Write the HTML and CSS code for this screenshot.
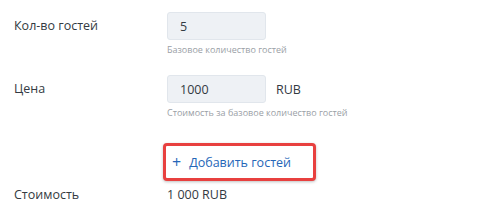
FILE: index.html
```html
<!DOCTYPE html>
<html>
<head>
    <meta charset="UTF-8" />
    <title>Гости и цена</title>
    <link rel="stylesheet" href="styles.css">
</head>
<body>

    <div class="form">
        <div class="row">
            <div class="label">Кол-во гостей</div>
            <div class="field">
                <div class="line">
                    <input type="text" class="input" value="5">
                </div>
                <div class="hint">Базовое количество гостей</div>
            </div>
        </div>

        <div class="row">
            <div class="label">Цена</div>
            <div class="field">
                <div class="line">
                    <input type="text" class="input" value="1000">
                    <span class="unit">RUB</span>
                </div>
                <div class="hint">Стоимость за базовое количество гостей</div>
            </div>
        </div>

        <div class="row row-add">
            <div class="label"></div>
            <div class="field">
                <button class="add">
                    <span class="plus">+</span>
                    Добавить гостей
                </button>
            </div>
        </div>

        <div class="row">
            <div class="label">Стоимость</div>
            <div class="field total">1 000 RUB</div>
        </div>
    </div>

</body>
</html>
```

FILE: styles.css
```css
body {
    margin: 0;
    background-color: #ffffff;
    font-family: "Open Sans", "Noto Sans", sans-serif;
    color: #333a42;
}

div.form {
    padding: 12px 0 0 14px;
}

div.row {
    display: grid;
    grid-template-columns: 153px 1fr;
}

div.label {
    font-size: 12.5px;
    line-height: 28px;
}

div.line {
    display: flex;
    align-items: center;
    gap: 10px;
}

input.input {
    box-sizing: border-box;
    width: 99px;
    height: 28px;
    padding: 0 12px;
    border: 1px solid #e1e6ec;
    border-radius: 3px;
    background-color: #eef1f5;
    font-family: inherit;
    font-size: 12.5px;
    color: #333a42;
}

span.unit {
    font-size: 12.5px;
}

div.hint {
    margin-top: 4px;
    margin-bottom: 19px;
    font-size: 9px;
    line-height: 12px;
    color: #9aa0a6;
}

div.row-add {
    margin-top: 5px;
}

button.add {
    box-sizing: border-box;
    margin-left: -4px;
    width: 153px;
    height: 38px;
    padding: 0 0 0 6px;
    display: flex;
    align-items: center;
    gap: 8px;
    border: 3px solid #e8403f;
    border-radius: 4px;
    background-color: #ffffff;
    box-shadow: 0 1px 3px rgba(0, 0, 0, 0.25);
    font-family: inherit;
    font-size: 12.5px;
    color: #2566b8;
}

span.plus {
    font-size: 16px;
    line-height: 16px;
}

div.total {
    font-size: 12.5px;
    line-height: 28px;
}
```
